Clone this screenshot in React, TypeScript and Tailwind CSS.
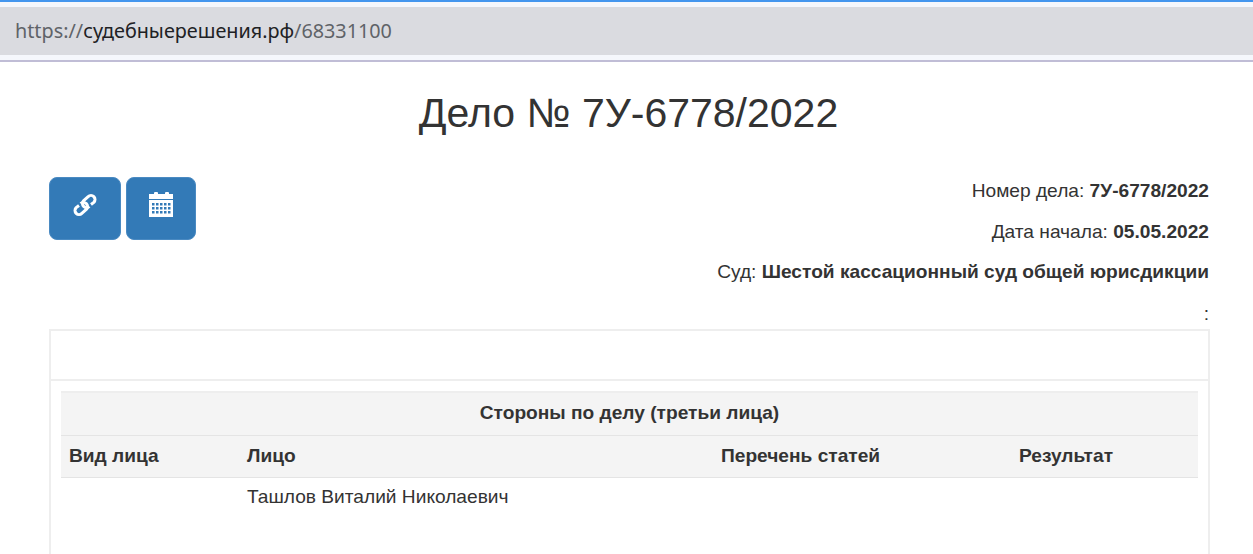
const dotCols = [2, 6, 10, 14, 18];
const dotRows = [5, 9, 13];

function LinkIcon() {
  return (
    <svg width="24" height="24" viewBox="0 0 24 23" fill="none" stroke="white" strokeWidth="3" strokeLinecap="butt" strokeLinejoin="round">
      <path d="M18 11 L20.83 8.83 A4 4 0 0 0 15.17 3.17 L10.67 7.17 A4 4 0 0 0 16.33 12.83" />
      <path d="M6 12 L3.17 14.17 A4 4 0 0 0 8.83 19.83 L13.33 15.83 A4 4 0 0 0 7.67 10.17" />
    </svg>
  );
}

function CalendarIcon() {
  return (
    <svg width="24" height="25" viewBox="0 0 24 25" fill="white">
      <rect x="5" y="0" width="4" height="4" rx="1" />
      <rect x="16" y="0" width="4" height="4" rx="1" />
      <rect x="0" y="2" width="24" height="5" />
      <g>
        <rect x="0" y="8" width="24" height="17" />
        {dotRows.map((y) =>
          dotCols.map((x) => (
            <rect key={`${x}-${y}`} x={x + 1} y={y + 6} width="2.5" height="2.5" fill="#337ab7" />
          ))
        )}
      </g>
    </svg>
  );
}

export default function App() {
  return (
    <div className="h-[554px] overflow-hidden bg-white font-['Liberation_Sans',sans-serif] text-[#333]">
      {/* полоска браузера */}
      <div className="h-[2px] bg-[#4496ee]" />
      <div className="h-[5px] bg-[#f5f7fc]" />
      <div className="flex h-[48px] items-center bg-[#dadbe0] pl-[15px] font-['Noto_Sans',sans-serif] text-[19.8px] text-[#5f6368]">
        <span>https://</span>
        <span className="text-[#202124]">судебныерешения.рф</span>
        <span>/68331100</span>
      </div>
      <div className="h-[5px] bg-[#f5f7fc]" />
      <div className="h-[2px] bg-[#c0bdd6]" />

      <h1 className="mt-[23px] pl-[4px] text-center text-[41px] leading-[57px] font-normal">Дело № 7У-6778/2022</h1>

      <div className="mt-[35px] flex justify-between pr-[44px] pl-[49px]">
        <div className="flex gap-[5px]">
          <button className="flex h-[63px] w-[72px] items-center justify-center rounded-[8px] border border-[#4a8ac2] bg-[#337ab7] pb-[8px] text-white">
            <LinkIcon />
          </button>
          <button className="flex h-[63px] w-[70px] items-center justify-center rounded-[8px] border border-[#4a8ac2] bg-[#337ab7] pb-[8px] text-white">
            <CalendarIcon />
          </button>
        </div>
        <div className="text-right text-[19.15px] leading-[27px]">
          <p className="mb-[14px]">Номер дела: <b>7У-6778/2022</b></p>
          <p className="mb-[13px]">Дата начала: <b>05.05.2022</b></p>
          <p className="mb-[14.5px]">Суд: <b>Шестой кассационный суд общей юрисдикции</b></p>
          <p>:</p>
        </div>
      </div>

      <div className="mt-[2.5px] mr-[43px] ml-[49px] h-[300px] border-2 border-[#eeeeee]">
        <div className="h-[50px] border-b-2 border-[#eeeeee]" />
        <div className="px-[10px] pt-[10px]">
          <table className="w-full table-fixed text-[19.15px]">
            <colgroup>
              <col className="w-[178px]" />
              <col className="w-[474px]" />
              <col className="w-[298px]" />
              <col />
            </colgroup>
            <thead className="bg-[#f4f4f4]">
              <tr className="h-[43px] border-t-2 border-[#eeeeee]">
                <th colSpan={4} className="p-0 pb-[2px] text-center leading-[24px] font-bold">Стороны по делу (третьи лица)</th>
              </tr>
              <tr className="h-[42px] border-y border-[#e4e4e4]">
                <th className="px-[8px] py-0 text-left leading-[24px] font-bold">Вид лица</th>
                <th className="px-[8px] py-0 text-left leading-[24px] font-bold">Лицо</th>
                <th className="px-[8px] py-0 text-left leading-[24px] font-bold">Перечень статей</th>
                <th className="px-[8px] py-0 text-left leading-[24px] font-bold">Результат</th>
              </tr>
            </thead>
            <tbody>
              <tr>
                <td className="p-[8px]" />
                <td className="px-[8px] pt-[7px] pb-[8px] leading-[24px]">Ташлов Виталий Николаевич</td>
                <td className="p-[8px]" />
                <td className="p-[8px]" />
              </tr>
            </tbody>
          </table>
        </div>
      </div>
    </div>
  );
}
